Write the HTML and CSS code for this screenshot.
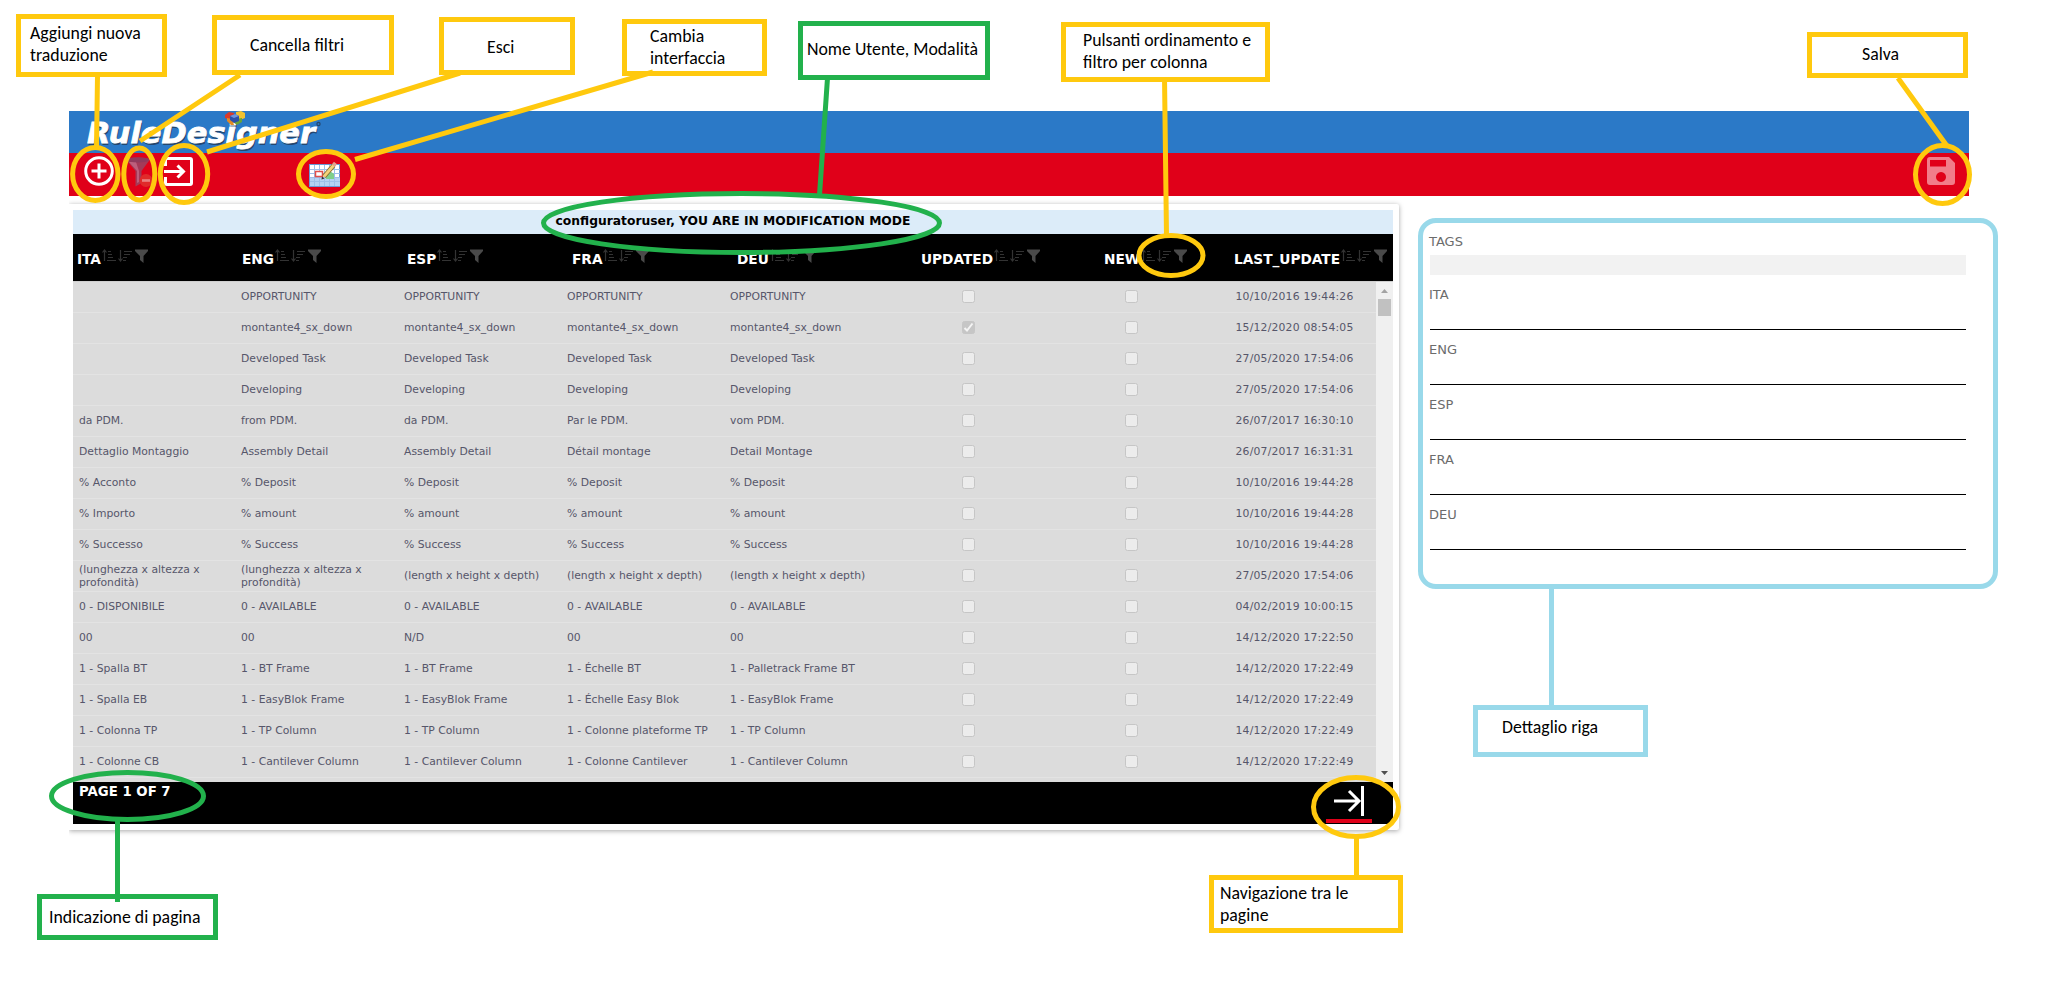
FILE: index.html
```html
<!DOCTYPE html>
<html lang="it">
<head>
<meta charset="utf-8">
<title>RuleDesigner</title>
<link rel="stylesheet" href="styles.css">
</head>
<body>
<svg class="defs" aria-hidden="true">
  <symbol id="sorts" viewBox="0 0 46 14">
    <g fill="none" stroke="#333" stroke-width="1.2">
      <path d="M2.500 12V1M.5 3.500l2-2.500 2 2.500M6 2.500h3M6 5.500h4M6 8.500h5M5 11.500h9"/>
      <path d="M18.500 1v11M16.500 9.500l2 2.500 2-2.500M22 2.500h8M22 5.500h6M21 8.500h4M21 11.500h3"/>
    </g>
    <path fill="#4a4a4a" d="M33 .5h13v1.500l-4.500 5V14L38 11V7L33 2z"/>
  </symbol>
</svg>
<div class="app">
  <header class="brand">
    <svg class="logo" width="260" height="42" viewBox="0 0 260 42">
      <g class="logo-text">
        <text class="logo-shadow" x="1" y="33.500" textLength="228" lengthAdjust="spacingAndGlyphs">RuleDesigner</text>
        <text class="logo-face" x="0" y="32" textLength="228" lengthAdjust="spacingAndGlyphs">RuleDesigner</text>
      </g>
      <circle cx="231.500" cy="13" r="1.600" fill="none" stroke="#24466e" stroke-width="1.200"/>
      <path fill="#d93a2b" d="M138 4l4-3 5 1 1 4-5 3-5-2z"/>
      <path fill="#f2c230" d="M149 1l5-1 4 2v5l-5 2-4-3z"/>
      <path fill="#68a33a" d="M149 8l6-1v4l-5 3-4-3z"/>
      <path fill="#e48a26" d="M140 7l5 1 2 6-3 0-4-4z"/>
      <path fill="#2c50a8" d="M143 5l5-2 4 2v5l-5 2-4-3z"/>
      <path fill="#6f93dc" d="M143 5l5-2 4 2-5 2z"/>
    </svg>
  </header>
  <nav class="toolbar">
    <svg width="30" height="30" viewBox="0 0 30 30" fill="none" stroke="#fff" stroke-width="3"><circle cx="15" cy="15" r="13.300"/><path d="M15 7.500v15M7.500 15h15"/></svg>
    <svg class="ic-filter" width="27" height="32" viewBox="0 0 27 32">
      <path fill="#a33a58" d="M0 3.500C0 1 24 1 24 3.500L15.500 15v12l-6 3.500V15z"/>
      <path fill="#bd5f7c" d="M3 6l8 9v12l2-1V15L10 6z"/>
      <ellipse cx="12" cy="3.800" rx="11.500" ry="2.600" fill="#8f3a5c"/>
      <circle cx="20" cy="24.500" r="6.500" fill="#e02a2a"/><path stroke="#e98080" stroke-width="2.600" d="M16 24.500h8"/>
    </svg>
    <svg class="ic-exit" width="29" height="29" viewBox="0 0 29 29" fill="none" stroke="#fff" stroke-width="3"><path d="M1.500 9V3q0-1.500 1.500-1.500h23q1.500 0 1.500 1.500v23q0 1.500-1.500 1.500H3q-1.500 0-1.500-1.500v-6M0 14.500h19M13.500 8.500l6 6-6 6"/></svg>
    <svg class="ic-grid" width="32" height="27" viewBox="0 0 32 27">
      <rect x=".5" y="3.500" width="30" height="22" fill="#fff" stroke="#6b9ad6"/>
      <path fill="#b4d2f3" d="M1 16h30v9H1z"/>
      <path stroke="#9dbfe8" stroke-width="1" d="M1 8.500h30M1 12.500h30M1 16.500h30M1 20.500h30M5.500 4v21M10.500 4v21M15.500 4v21M20.500 4v21M25.500 4v21"/>
      <path fill="#fff" stroke="#e2504a" stroke-width="1.500" d="M6.500 10.500h7v5h-7z"/>
      <path fill="#7fd08a" d="M17 13l4-3 4 3v5h-8z"/>
      <path stroke="#8a6a2c" stroke-width="4.500" d="M15 15.500l9.500-11"/><path stroke="#f3d27a" stroke-width="2.800" d="M15 15.500l9.500-11"/><path stroke="#e5a08d" stroke-width="4" d="M24.500 4.500l2-2.500"/><path fill="#333" d="M12.500 18.500l.5-3 2.500 2z"/>
    </svg>
    <svg class="ic-save" width="28" height="28" viewBox="0 0 28 28"><path fill="#f17d8a" fill-rule="evenodd" d="M3 0h19l6 6v19q0 3-3 3H3q-3 0-3-3V3q0-3 3-3zM3 3v6.500h16V3zM14 15a5 5 0 1 0 .01 0z"/></svg>
  </nav>
  <main class="content">
    <section class="grid">
      <div class="mode">configuratoruser, YOU ARE IN MODIFICATION MODE</div>
      <div class="heads">
        <div>ITA<svg><use href="#sorts"/></svg></div><div>ENG<svg><use href="#sorts"/></svg></div><div>ESP<svg><use href="#sorts"/></svg></div><div>FRA<svg><use href="#sorts"/></svg></div><div>DEU<svg><use href="#sorts"/></svg></div><div class="mid">UPDATED<svg><use href="#sorts"/></svg></div><div class="mid">NEW<svg><use href="#sorts"/></svg></div><div class="mid">LAST_UPDATE<svg><use href="#sorts"/></svg></div>
      </div>
      <div class="scroller">
        <div class="rows">
          <div class="row"><span></span><span>OPPORTUNITY</span><span>OPPORTUNITY</span><span>OPPORTUNITY</span><span>OPPORTUNITY</span><i></i><i></i><time>10/10/2016 19:44:26</time></div>
          <div class="row"><span></span><span>montante4_sx_down</span><span>montante4_sx_down</span><span>montante4_sx_down</span><span>montante4_sx_down</span><i class="on"><svg width="13" height="13" viewBox="0 0 13 13"><path d="M2.500 7l2.500 2.500 5.500-7" fill="none" stroke="#f4f4f4" stroke-width="2"/></svg></i><i></i><time>15/12/2020 08:54:05</time></div>
          <div class="row"><span></span><span>Developed Task</span><span>Developed Task</span><span>Developed Task</span><span>Developed Task</span><i></i><i></i><time>27/05/2020 17:54:06</time></div>
          <div class="row"><span></span><span>Developing</span><span>Developing</span><span>Developing</span><span>Developing</span><i></i><i></i><time>27/05/2020 17:54:06</time></div>
          <div class="row"><span>da PDM.</span><span>from PDM.</span><span>da PDM.</span><span>Par le PDM.</span><span>vom PDM.</span><i></i><i></i><time>26/07/2017 16:30:10</time></div>
          <div class="row"><span>Dettaglio Montaggio</span><span>Assembly Detail</span><span>Assembly Detail</span><span>Détail montage</span><span>Detail Montage</span><i></i><i></i><time>26/07/2017 16:31:31</time></div>
          <div class="row"><span>% Acconto</span><span>% Deposit</span><span>% Deposit</span><span>% Deposit</span><span>% Deposit</span><i></i><i></i><time>10/10/2016 19:44:28</time></div>
          <div class="row"><span>% Importo</span><span>% amount</span><span>% amount</span><span>% amount</span><span>% amount</span><i></i><i></i><time>10/10/2016 19:44:28</time></div>
          <div class="row"><span>% Successo</span><span>% Success</span><span>% Success</span><span>% Success</span><span>% Success</span><i></i><i></i><time>10/10/2016 19:44:28</time></div>
          <div class="row"><span>(lunghezza x altezza x<br>profondità)</span><span>(lunghezza x altezza x<br>profondità)</span><span>(length x height x depth)</span><span>(length x height x depth)</span><span>(length x height x depth)</span><i></i><i></i><time>27/05/2020 17:54:06</time></div>
          <div class="row"><span>0 - DISPONIBILE</span><span>0 - AVAILABLE</span><span>0 - AVAILABLE</span><span>0 - AVAILABLE</span><span>0 - AVAILABLE</span><i></i><i></i><time>04/02/2019 10:00:15</time></div>
          <div class="row"><span>00</span><span>00</span><span>N/D</span><span>00</span><span>00</span><i></i><i></i><time>14/12/2020 17:22:50</time></div>
          <div class="row"><span>1 - Spalla BT</span><span>1 - BT Frame</span><span>1 - BT Frame</span><span>1 - Échelle BT</span><span>1 - Palletrack Frame BT</span><i></i><i></i><time>14/12/2020 17:22:49</time></div>
          <div class="row"><span>1 - Spalla EB</span><span>1 - EasyBlok Frame</span><span>1 - EasyBlok Frame</span><span>1 - Échelle Easy Blok</span><span>1 - EasyBlok Frame</span><i></i><i></i><time>14/12/2020 17:22:49</time></div>
          <div class="row"><span>1 - Colonna TP</span><span>1 - TP Column</span><span>1 - TP Column</span><span>1 - Colonne plateforme TP</span><span>1 - TP Column</span><i></i><i></i><time>14/12/2020 17:22:49</time></div>
          <div class="row"><span>1 - Colonne CB</span><span>1 - Cantilever Column</span><span>1 - Cantilever Column</span><span>1 - Colonne Cantilever</span><span>1 - Cantilever Column</span><i></i><i></i><time>14/12/2020 17:22:49</time></div>
        </div>
        <div class="bar">
          <svg width="7" height="4"><path d="M0 4h7L3.500 0z" fill="#a3a3a3"/></svg>
          <div class="thumb"></div>
          <svg class="down" width="7" height="4"><path d="M0 0h7L3.500 4z" fill="#505050"/></svg>
        </div>
      </div>
      <footer class="pager">
        <span>PAGE 1 OF 7</span>
        <div class="last"><svg width="32" height="30" viewBox="0 0 32 30" fill="none" stroke="#fff" stroke-width="3"><path d="M0 15h25M15 5l10 10-10 10"/><path d="M28.500 0v30"/></svg></div>
      </footer>
    </section>
    <section class="detail">
      <div class="field tags"><label>TAGS</label></div>
      <div class="field"><label>ITA</label></div>
      <div class="field"><label>ENG</label></div>
      <div class="field"><label>ESP</label></div>
      <div class="field"><label>FRA</label></div>
      <div class="field"><label>DEU</label></div>
    </section>
  </main>
</div>
<div class="notes">
  <svg class="strokes" width="2052" height="991" viewBox="0 0 2052 991" fill="none" stroke-width="5">
    <g stroke="#ffc90e">
      <path d="M97.500 76L96.500 148M240 75L140 141M460 73L207 152M653 72L355 159.500M1164.500 77L1166.500 236M1898 78L1947 146M1356.500 835V877"/>
      <ellipse cx="95.300" cy="174" rx="22.700" ry="26.500"/>
      <ellipse cx="139.300" cy="174" rx="15.500" ry="26"/>
      <ellipse cx="184" cy="174" rx="23.700" ry="28.500"/>
      <ellipse cx="326" cy="174" rx="27.500" ry="22.500"/>
      <ellipse cx="1171" cy="255.500" rx="32" ry="20"/>
      <ellipse cx="1942.500" cy="174.500" rx="27" ry="29"/>
      <ellipse cx="1356" cy="807" rx="42.500" ry="29.500"/>
    </g>
    <g stroke="#22b14c">
      <path d="M827.500 78L819.500 195M117.500 820V902"/>
      <ellipse cx="741.500" cy="223" rx="198" ry="29.500"/>
      <ellipse cx="127.500" cy="796" rx="76" ry="23.500"/>
    </g>
    <path stroke="#99d9ea" d="M1551.500 587V710"/>
  </svg>
  <div class="note n-add">Aggiungi nuova<br>traduzione</div>
  <div class="note n-clear">Cancella filtri</div>
  <div class="note n-exit">Esci</div>
  <div class="note n-ui">Cambia<br>interfaccia</div>
  <div class="note green n-user">Nome Utente, Modalità</div>
  <div class="note n-sort">Pulsanti ordinamento e<br>filtro per colonna</div>
  <div class="note n-save">Salva</div>
  <div class="note green n-page">Indicazione di pagina</div>
  <div class="note n-nav">Navigazione tra le<br>pagine</div>
  <div class="note cyan n-row">Dettaglio riga</div>
  <div class="frame"></div>
</div>
</body>
</html>
```
FILE: styles.css
```css
* { box-sizing: border-box; }
body { margin: 0; position: relative; width: 2052px; height: 991px; overflow: hidden; background: #fff; font-family: Verdana, "DejaVu Sans", sans-serif; }
svg { display: block; flex: none; }
.defs { position: absolute; width: 0; height: 0; }
.app { padding: 111px 83px 0 69px; }
.brand { height: 42px; background: #2b79c7; padding-left: 18px; }
.logo-text { font: italic bold 28px "DejaVu Sans", sans-serif; fill: #fff; }
.logo-shadow { fill: #24466e; }
.logo-face { stroke: #fff; stroke-width: .8px; }
.toolbar { height: 43px; background: #e00019; display: flex; align-items: flex-start; padding: 3px 14px 0 15px; }
.ic-filter { margin-left: 12px; }
.ic-exit { margin: 1px 0 0 11px; }
.ic-grid { margin: 5px 0 0 116px; }
.ic-save { margin: 1px 0 0 auto; }
.content { display: flex; align-items: flex-start; padding-top: 8px; }
.grid { width: 1330px; height: 626px; padding: 6px 6px 6px 4px; background: #fff; border-radius: 0 2px 2px 0; box-shadow: 0 1px 5px rgba(0,0,0,.35); clip-path: inset(-5px -8px -8px 0); }
.mode { height: 24px; line-height: 23px; background: #dcecf9; text-align: center; font-weight: bold; font-size: 12.300px; color: #000; }
.heads { height: 47px; background: #000; color: #fff; display: grid; grid-template-columns: repeat(8, 165px); font-weight: bold; font-size: 13.700px; padding-top: 17px; }
.heads div { display: flex; padding-left: 4px; line-height: 17px; }
.heads svg { width: 46px; height: 14px; margin: -2px 0 0 1px; }
.heads .mid { justify-content: center; padding-left: 0; }
.scroller { height: 501px; display: flex; background: #dcdcdc; border-top: 1px solid #cfcfcf; }
.rows { width: 1303px; }
.row { height: 31px; display: grid; grid-template-columns: 162px repeat(6, 163px) 163px; align-items: center; padding-bottom: 1px; border-bottom: 1px solid #e3e3e3; font-size: 10.800px; line-height: 13px; color: #56566a; }
.row span { padding-left: 6px; white-space: nowrap; }
.row i { width: 13px; height: 13px; justify-self: center; border: 1px solid #c6c6c6; border-radius: 2.500px; background: #ececec; }
.row .on { background: #c6c6c6; }
.on svg { margin: -1px; }
.row time { text-align: center; letter-spacing: .2px; }
.bar { width: 17px; background: #f0f0f0; display: flex; flex-direction: column; align-items: center; padding-top: 7px; }
.thumb { width: 13px; height: 17px; margin-top: 6px; background: #c1c1c1; }
.down { margin: auto 0 7px; }
.pager { height: 42px; background: #000; color: #fff; display: flex; justify-content: space-between; padding: 0 21px 0 6px; font-size: 13.300px; font-weight: bold; line-height: 19px; }
.last { width: 46px; height: 41px; padding: 4px 0 0 8px; border-bottom: 4px solid #e00019; }
.detail { width: 537px; margin: 24px 0 0 30px; padding-left: 1px; }
.field { display: flow-root; height: 55px; border-bottom: 1px solid #000; font-size: 13px; color: #6c6c6c; }
.field label { display: block; margin: 10px 0 0 -1px; line-height: 20px; }
.tags { height: 47px; border-bottom: 20px solid #f2f2f2; }
.tags label { margin-top: 4px; }
.notes { position: absolute; inset: 0; }
.strokes { position: absolute; inset: 0; }
.note { position: absolute; display: flow-root; border: 5px solid #ffc90e; font: 17.800px/22px Carlito, Lato, sans-serif; color: #000; white-space: nowrap; }
.green { border-color: #22b14c; }
.cyan { border-color: #99d9ea; }
.n-add { left: 16px; top: 14px; width: 151px; height: 63px; padding: 3px 0 0 9px; }
.n-clear { left: 212px; top: 15px; width: 182px; height: 60px; padding: 14px 0 0 33px; }
.n-exit { left: 439px; top: 17px; width: 136px; height: 58px; padding: 14px 0 0 43px; }
.n-ui { left: 622px; top: 19px; width: 145px; height: 57px; padding: 1px 0 0 23px; }
.n-user { left: 798px; top: 21px; width: 192px; height: 59px; padding: 12px 0 0 4px; }
.n-sort { left: 1061px; top: 22px; width: 209px; height: 60px; padding: 2px 0 0 17px; }
.n-save { left: 1807px; top: 32px; width: 161px; height: 46px; padding: 6px 0 0 50px; }
.n-page { left: 37px; top: 894px; width: 181px; height: 46px; padding: 7px 0 0 7px; }
.n-nav { left: 1209px; top: 875px; width: 194px; height: 58px; padding: 2px 0 0 6px; }
.n-row { left: 1473px; top: 705px; width: 175px; height: 52px; padding: 6px 0 0 24px; }
.frame { position: absolute; left: 1418px; top: 218px; width: 580px; height: 371px; border: 5px solid #99d9ea; border-radius: 18px; }
```
